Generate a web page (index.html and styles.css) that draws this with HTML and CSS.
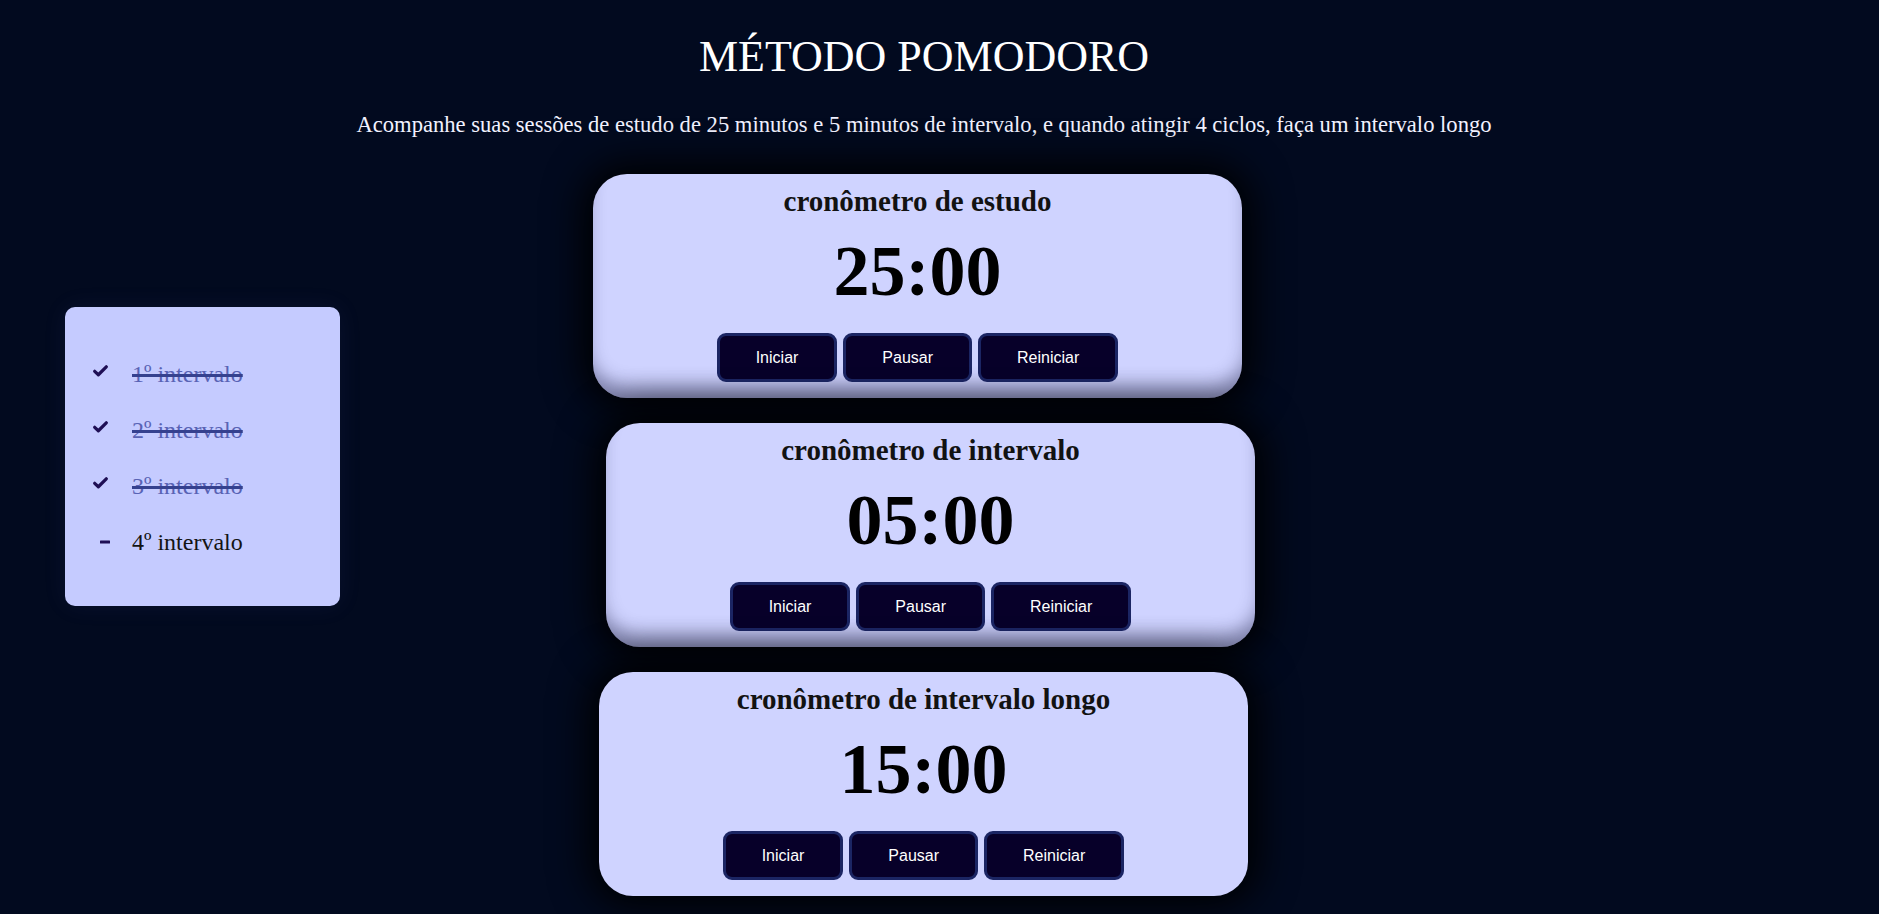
FILE: index.html
```html
<!DOCTYPE html>
<html lang="pt-BR">
<head>
<meta charset="utf-8">
<title>Método Pomodoro</title>
<link rel="stylesheet" href="styles.css">
</head>
<body>
<header class="header">
  <h1 class="title">MÉTODO POMODORO</h1>
  <p class="subtitle">Acompanhe suas sessões de estudo de 25 minutos e 5 minutos de intervalo, e quando atingir 4 ciclos, faça um intervalo longo</p>
</header>
<main class="main">
  <aside class="cycles">
    <ul class="cycle-list">
      <li class="cycle done">
        <span class="cycle-icon"><svg class="icon-check" viewBox="0 0 14 11" width="15" height="12"><path d="M1.6 5.8 L5 9 L12.4 1.6" fill="none" stroke="currentColor" stroke-width="3" stroke-linecap="round" stroke-linejoin="round"/></svg></span>
        <span class="cycle-text">1º intervalo</span>
      </li>
      <li class="cycle done">
        <span class="cycle-icon"><svg class="icon-check" viewBox="0 0 14 11" width="15" height="12"><path d="M1.6 5.8 L5 9 L12.4 1.6" fill="none" stroke="currentColor" stroke-width="3" stroke-linecap="round" stroke-linejoin="round"/></svg></span>
        <span class="cycle-text">2º intervalo</span>
      </li>
      <li class="cycle done">
        <span class="cycle-icon"><svg class="icon-check" viewBox="0 0 14 11" width="15" height="12"><path d="M1.6 5.8 L5 9 L12.4 1.6" fill="none" stroke="currentColor" stroke-width="3" stroke-linecap="round" stroke-linejoin="round"/></svg></span>
        <span class="cycle-text">3º intervalo</span>
      </li>
      <li class="cycle">
        <span class="cycle-icon"><svg class="icon-dash" viewBox="0 0 10 4" width="10" height="4"><rect x="0" y="0.5" width="10" height="3" rx="0.5" fill="currentColor"/></svg></span>
        <span class="cycle-text">4º intervalo</span>
      </li>
    </ul>
  </aside>
  <section class="timers">
    <div class="timer-card card-study">
      <h2 class="timer-title">cronômetro de estudo</h2>
      <div class="timer-time">25:00</div>
      <div class="timer-actions">
        <button class="btn">Iniciar</button>
        <button class="btn">Pausar</button>
        <button class="btn">Reiniciar</button>
      </div>
    </div>
    <div class="timer-card card-break">
      <h2 class="timer-title">cronômetro de intervalo</h2>
      <div class="timer-time">05:00</div>
      <div class="timer-actions">
        <button class="btn">Iniciar</button>
        <button class="btn">Pausar</button>
        <button class="btn">Reiniciar</button>
      </div>
    </div>
    <div class="timer-card card-long">
      <h2 class="timer-title">cronômetro de intervalo longo</h2>
      <div class="timer-time">15:00</div>
      <div class="timer-actions">
        <button class="btn">Iniciar</button>
        <button class="btn">Pausar</button>
        <button class="btn">Reiniciar</button>
      </div>
    </div>
  </section>
</main>
</body>
</html>
```

FILE: styles.css
```css
* { box-sizing: border-box; }

html, body {
  margin: 0;
  padding: 0;
}

body {
  background: #020a1f;
  font-family: "Liberation Serif", "Times New Roman", serif;
  color: #ffffff;
  height: 914px;
  overflow: hidden;
}

.header {
  padding-right: 31px;
  text-align: center;
}

.title {
  margin: 0;
  padding-top: 32px;
  font-size: 44px;
  line-height: 50px;
  font-weight: 400;
  color: #ffffff;
}

.subtitle {
  margin: 30px 0 0;
  font-size: 22.6px;
  line-height: 26px;
  color: #f2f2ff;
}

.main {
  display: flex;
  align-items: flex-start;
  padding-left: 65px;
  margin-top: 36px;
}

.cycles {
  width: 275px;
  height: 299px;
  margin-top: 133px;
  background: #c5cbff;
  border-radius: 10px;
  box-shadow: 0 0 24px rgba(110, 120, 220, 0.08);
}

.cycle-list {
  list-style: none;
  margin: 0;
  padding: 39px 0 0 28px;
}

.cycle {
  display: flex;
  align-items: center;
  height: 56px;
  font-size: 24px;
  color: #141414;
}

.cycle-icon {
  width: 39px;
  display: flex;
  align-items: center;
  color: #1f0f55;
}

.icon-check { display: block; margin-top: -6px; }
.icon-dash { display: block; margin-left: 7px; }

.cycle.done .cycle-text {
  color: #5963b5;
  text-decoration: line-through;
  text-decoration-color: #35418f;
  text-decoration-thickness: 3px;
}

.timers {
  display: flex;
  flex-direction: column;
  gap: 25px;
  margin-left: 253px;
}

.timer-card {
  width: 649px;
  padding: 11px 0 16px;
  background: #cfd3ff;
  border-radius: 34px;
  text-align: center;
  box-shadow: 0 0 38px 10px #000000;
}

.card-study,
.card-break {
  box-shadow: 0 0 38px 10px #000000, inset 0 -18px 18px -6px rgba(20, 22, 60, 0.42);
}

.card-break { margin-left: 13px; }
.card-long { margin-left: 6px; }

.timer-title {
  margin: 0;
  font-size: 29px;
  line-height: 32px;
  font-weight: 700;
  color: #121212;
}

.timer-time {
  margin-top: 14px;
  font-size: 72px;
  line-height: 80px;
  font-weight: 700;
  color: #000000;
}

.timer-actions {
  display: flex;
  justify-content: center;
  gap: 6px;
  margin-top: 22px;
}

.btn {
  font-family: "Liberation Sans", Arial, sans-serif;
  font-size: 16px;
  line-height: 19px;
  padding: 12px 36px;
  color: #ffffff;
  background: #070029;
  border: 3px solid #1b2563;
  border-radius: 9px;
  cursor: pointer;
}
```
